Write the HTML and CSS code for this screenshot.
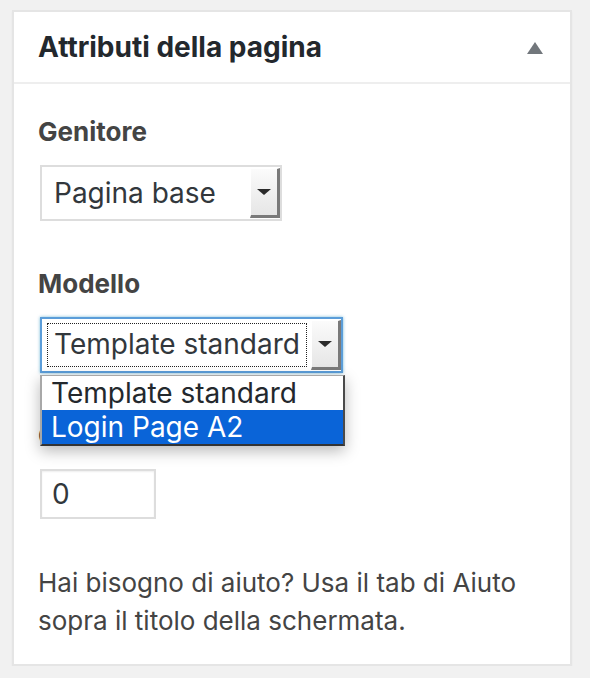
FILE: index.html
```html
<!DOCTYPE html>
<html lang="it">
<head>
<meta charset="utf-8">
<title>Attributi della pagina</title>
<link rel="stylesheet" href="styles.css">
</head>
<body>
<div class="postbox">
  <div class="hndle">
    <h2 class="hndle-title">Attributi della pagina</h2>
    <span class="toggle">
      <svg width="16" height="12" viewBox="0 0 16 12"><polygon points="8,0 16,12 0,12" fill="#72777c"/></svg>
    </span>
  </div>
  <div class="inside">
    <div class="field">
      <p class="label">Genitore</p>
      <div class="select select-parent">
        <span class="value">Pagina base</span>
        <span class="btn"><svg width="14" height="6" viewBox="0 0 14 6"><polygon points="0,0 14,0 7,6" fill="#2b2b2b"/></svg></span>
      </div>
    </div>
    <div class="field">
      <p class="label">Modello</p>
      <div class="select-wrap">
        <div class="select select-template is-focused">
          <span class="value"><span class="focus-ring">Template standard</span></span>
          <span class="btn"><svg width="14" height="6" viewBox="0 0 14 6"><polygon points="0,0 14,0 7,6" fill="#2b2b2b"/></svg></span>
        </div>
        <ul class="menu">
          <li class="menu-item">Template standard</li>
          <li class="menu-item is-active">Login Page A2</li>
        </ul>
      </div>
    </div>
    <div class="field">
      <p class="label">Ordine</p>
      <div class="input">0</div>
    </div>
    <p class="help">Hai bisogno di aiuto? Usa il tab di Aiuto sopra il titolo della schermata.</p>
  </div>
</div>
</body>
</html>
```

FILE: styles.css
```css
* { box-sizing: border-box; }

body {
  margin: 0;
  background: #f1f1f1;
  font-family: Inter, "Noto Sans", sans-serif;
  color: #444;
}

.postbox {
  margin: 10px 0 0 12px;
  width: 560px;
  background: #fff;
  border: 2px solid #e5e5e5;
  box-shadow: 0 2px 2px rgba(0, 0, 0, 0.04);
}

.hndle {
  height: 72px;
  display: flex;
  align-items: center;
  justify-content: space-between;
  padding: 0 27px 0 24px;
  border-bottom: 2px solid #eeeeee;
}

.hndle-title {
  margin: 0;
  font-size: 28px;
  font-weight: 700;
  color: #23282d;
}

.toggle {
  display: flex;
  margin-top: 2px;
}

.inside {
  padding: 30px 24px 24px;
}

.field {
  margin-bottom: 45px;
}

.label {
  margin: 0 0 15px;
  font-size: 26px;
  line-height: 36px;
  font-weight: 700;
  color: #444;
}

.select {
  display: flex;
  height: 56px;
  border: 2px solid #dddddd;
  background: #fff;
  color: #32373c;
  font-size: 28px;
}

.select-parent {
  width: 242px;
  margin-left: 2px;
}

.select-parent .value {
  flex: 1;
  display: flex;
  align-items: center;
  padding-left: 12px;
}

.btn {
  width: 30px;
  margin: 1px 0;
  display: flex;
  align-items: center;
  justify-content: center;
  background: linear-gradient(#fbfbfb, #e6e6e6);
  border-right: 3px solid #7a7a7a;
  border-bottom: 3px solid #7a7a7a;
  border-top: 1px solid #fff;
  border-left: 1px solid #fff;
}

.select-wrap {
  position: relative;
  margin-left: 2px;
}

.select-template {
  width: 303px;
  border-color: #5b9dd9;
  box-shadow: 0 0 3px rgba(30, 140, 190, 0.6);
}

.select-template .value {
  flex: 1;
  padding: 4px 4px 4px 5px;
}

.focus-ring {
  display: block;
  height: 44px;
  border: 1px dotted #222;
  padding-left: 6px;
  line-height: 41px;
}

.menu {
  position: absolute;
  top: 58px;
  left: 0;
  width: 305px;
  margin: 0;
  padding: 0;
  list-style: none;
  background: #fff;
  border: 1px solid #a8a8a8;
  border-left-width: 2px;
  border-right: 2px solid #4a4a4a;
  border-bottom: 2px solid #333;
  box-shadow: 0 5px 14px rgba(0, 0, 0, 0.28);
  font-size: 28px;
  color: #23282d;
}

.menu-item {
  height: 34px;
  line-height: 34px;
  padding: 0 9px;
}

.menu-item.is-active {
  background: #0a64d8;
  color: #fff;
}

.input {
  width: 116px;
  height: 50px;
  margin-left: 2px;
  border: 2px solid #dddddd;
  box-shadow: inset 0 1px 2px rgba(0, 0, 0, 0.07);
  display: flex;
  align-items: center;
  padding-left: 10px;
  font-size: 28px;
  color: #32373c;
}

.help {
  margin: 0;
  font-size: 26px;
  line-height: 38px;
  color: #444;
}
```
